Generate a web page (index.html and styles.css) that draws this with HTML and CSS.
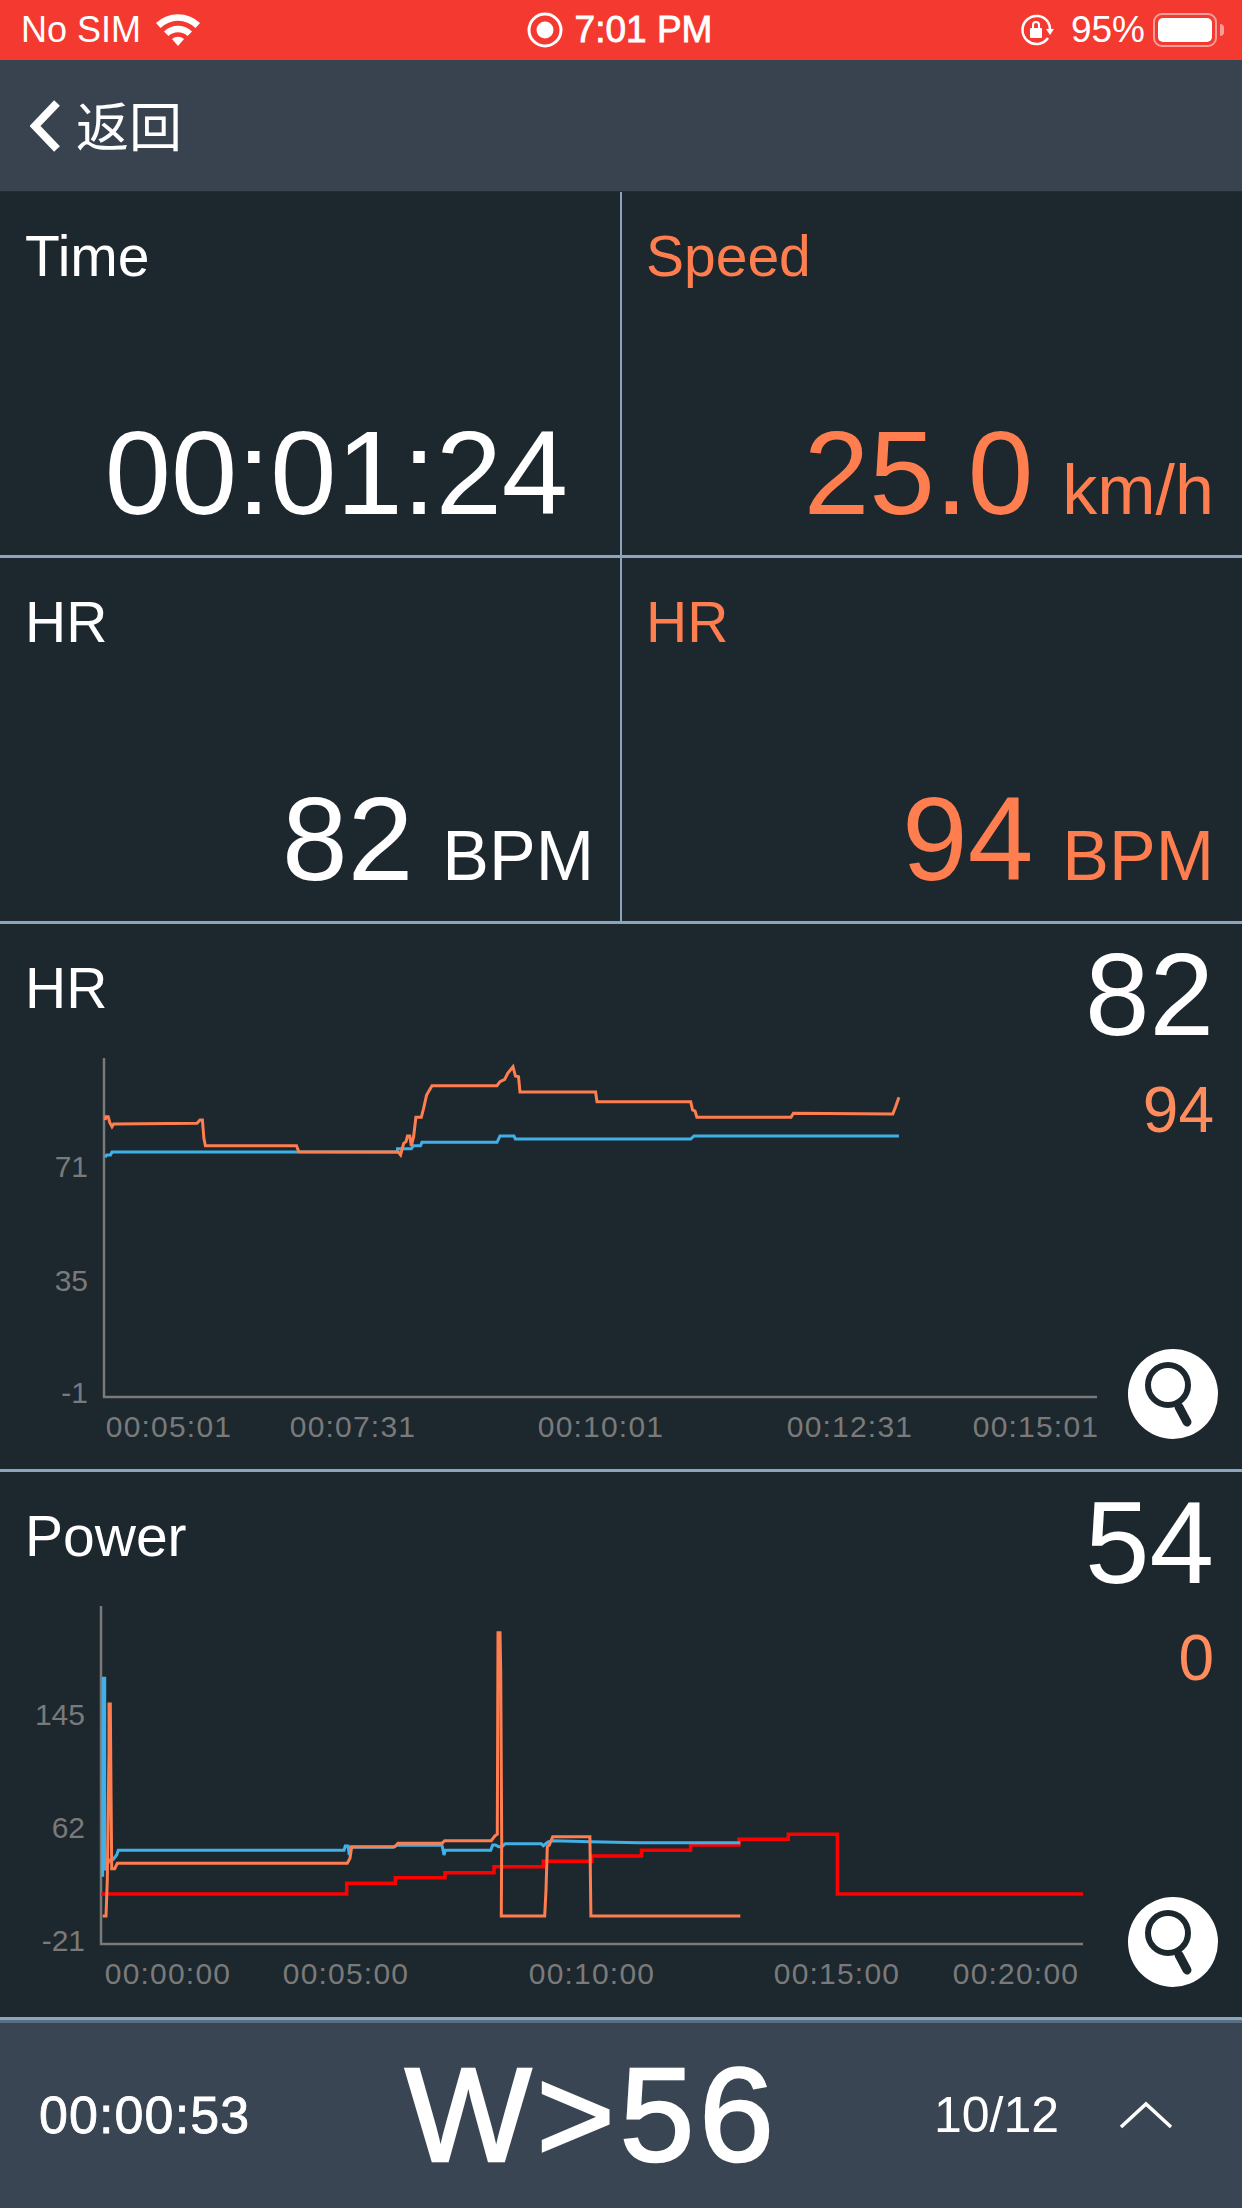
FILE: index.html
```html
<!DOCTYPE html>
<html lang="en">
<head>
    <meta charset="UTF-8">
    <meta name="viewport" content="width=device-width, initial-scale=1.0">
    <title>Workout</title>
    <link rel="stylesheet" href="styles.css">
</head>
<body>
    <div class="status-bar">
        <div class="status-left">
            <span>No SIM</span>
            <svg class="wifi" width="46" height="34" viewBox="0 0 46 34">
                <path d="M1 11 A32 32 0 0 1 45 11 L40.500 16 A25 25 0 0 0 5.500 16 Z" fill="#fff"/>
                <path d="M9 19.500 A20 20 0 0 1 37 19.500 L32.500 24 A14 14 0 0 0 13.500 24 Z" fill="#fff"/>
                <path d="M17 27 A9 9 0 0 1 29 27 L23 34 Z" fill="#fff"/>
            </svg>
        </div>
        <div class="status-center">
            <svg width="36" height="36" viewBox="0 0 36 36">
                <circle cx="18" cy="18" r="16" fill="none" stroke="#fff" stroke-width="3"/>
                <circle cx="18" cy="18" r="8.500" fill="#fff"/>
            </svg>
            <span>7:01 PM</span>
        </div>
        <div class="status-right">
            <svg width="34" height="32" viewBox="0 0 34 32">
                <path d="M27 24 A14 14 0 1 1 27 8" fill="none" stroke="#fff" stroke-width="2.500"/>
                <path d="M25 15 H33 L29 21 Z" fill="#fff"/>
                <path d="M27 8 A14 14 0 0 1 29 15" fill="none" stroke="#fff" stroke-width="2.500"/>
                <rect x="9" y="14" width="12" height="10" rx="1" fill="#fff"/>
                <path d="M12 14 V11 A3 3 0 0 1 18 11 V14" fill="none" stroke="#fff" stroke-width="2"/>
            </svg>
            <span>95%</span>
            <div class="battery"><div class="battery-fill"></div></div>
            <div class="battery-cap"></div>
        </div>
    </div>

    <div class="nav-bar">
        <svg width="30" height="52" viewBox="0 0 30 52">
            <polyline points="27,3 5,26 27,49" fill="none" stroke="#fff" stroke-width="8"/>
        </svg>
        <span class="back-text">返回</span>
    </div>

    <div class="tiles">
        <div class="tile">
            <div class="tile-label">Time</div>
            <div class="tile-value time-value">00:01:24</div>
        </div>
        <div class="tile orange">
            <div class="tile-label">Speed</div>
            <div class="tile-value">25.0<span class="unit">km/h</span></div>
        </div>
        <div class="tile">
            <div class="tile-label">HR</div>
            <div class="tile-value">82<span class="unit">BPM</span></div>
        </div>
        <div class="tile orange">
            <div class="tile-label">HR</div>
            <div class="tile-value">94<span class="unit">BPM</span></div>
        </div>
    </div>

    <div class="chart-panel">
        <div class="chart-head">
            <div class="tile-label">HR</div>
            <div class="chart-values">
                <div class="chart-now">82</div>
                <div class="chart-target">94</div>
            </div>
        </div>
        <svg class="chart" width="1242" height="545" viewBox="0 924 1242 545">
            <polyline class="axis" points="104,1058 104,1397 1097,1397"/>
            <text class="y-label" x="88" y="1177">71</text>
            <text class="y-label" x="88" y="1291">35</text>
            <text class="y-label" x="88" y="1403">-1</text>
            <text class="x-label" x="169" y="1437">00:05:01</text>
            <text class="x-label" x="353" y="1437">00:07:31</text>
            <text class="x-label" x="601" y="1437">00:10:01</text>
            <text class="x-label" x="850" y="1437">00:12:31</text>
            <text class="x-label" x="1036" y="1437">00:15:01</text>
            <polyline class="line blue" points="105.200,1157.300 106.700,1155 110.500,1155 112,1152 397.500,1152 397.500,1148.700 411.300,1148.700 413.600,1145.700 420.500,1145.700 422,1142.300 497,1142.300 500,1136 513.900,1136 515.400,1139 690.700,1139 694,1136 898.900,1136"/>
            <polyline class="line coral" points="105.200,1120 105.900,1116.700 108.200,1116.700 109.800,1122.700 112,1126.700 113.600,1124 197,1123.300 200,1120 202.400,1120 203.900,1138.300 205.400,1145.700 296.500,1145.700 298.800,1151.700 398.300,1152 400.600,1155 403.700,1143.300 406,1141.700 407.500,1136 409.800,1136 411.300,1146 413.600,1136.700 415.900,1117.300 421.300,1117.300 423.600,1108.300 426.600,1095 432,1085.700 497,1085.700 500,1081.700 504.700,1079.300 507.700,1073.300 513,1066.700 515.400,1076 518.500,1076.700 520,1092 595.600,1092 597,1101.700 690.700,1101.700 692.600,1110 695,1111 696.900,1117.300 791,1117.300 793.400,1113.300 892.800,1114 895.600,1106.700 898.900,1097.300"/>
        </svg>
        <div class="zoom-button">
            <svg width="90" height="90" viewBox="0 0 90 90">
                <circle cx="40" cy="36" r="20" fill="none" stroke="#1d272e" stroke-width="6"/>
                <line x1="51" y1="58" x2="59" y2="73" stroke="#1d272e" stroke-width="9" stroke-linecap="round"/>
            </svg>
        </div>
    </div>

    <div class="chart-panel">
        <div class="chart-head">
            <div class="tile-label">Power</div>
            <div class="chart-values">
                <div class="chart-now">54</div>
                <div class="chart-target">0</div>
            </div>
        </div>
        <svg class="chart" width="1242" height="544" viewBox="0 1472 1242 544">
            <polyline class="axis" points="101,1606 101,1944 1083,1944"/>
            <text class="y-label" x="85" y="1725">145</text>
            <text class="y-label" x="85" y="1838">62</text>
            <text class="y-label" x="85" y="1951">-21</text>
            <text class="x-label" x="168" y="1984">00:00:00</text>
            <text class="x-label" x="346" y="1984">00:05:00</text>
            <text class="x-label" x="592" y="1984">00:10:00</text>
            <text class="x-label" x="837" y="1984">00:15:00</text>
            <text class="x-label" x="1016" y="1984">00:20:00</text>
            <polyline class="line red" points="101.300,1894 346.700,1894 346.700,1883.300 395.300,1883.300 395.300,1877.700 445,1877.700 445,1872.700 494,1872.700 494,1866.700 543.300,1866.700 543.300,1861.300 591.900,1861.300 591.900,1856 641.500,1856 641.500,1850.300 690.600,1850.300 690.600,1845 739,1845 739,1839.300 788.300,1839.300 788.300,1834.300 837.400,1834.300 837.400,1894 1083,1894"/>
            <polyline class="line blue" points="102.700,1876.700 103.300,1678.300 104.700,1678.300 104.700,1870 109.300,1860 113.300,1859.300 116.700,1855 118.300,1850.300 344,1850.300 345.300,1846 348,1846 349.300,1855 350.700,1847.300 393.300,1847.300 396.700,1845.300 442,1845.300 444,1855 445.300,1850.300 490.700,1850.300 492.700,1845 495.300,1845 498.700,1846.700 502,1846.700 505.300,1843.700 541.300,1843.700 543.300,1845.700 548,1842 553.300,1840.700 590.900,1841.700 638.500,1842.700 740.300,1842.700"/>
            <polyline class="line coral" points="102.700,1916 106,1916 107.300,1880 109,1750 109,1704 110.300,1704 111,1790 111.700,1868.700 114.700,1868.700 117.300,1863.300 347.300,1863.300 350,1858.300 351.700,1846.700 394.700,1846.700 398,1843.300 442,1843.300 444.700,1840.700 491.300,1840.700 494.700,1836 497.300,1834.300 498,1632.700 500,1632.700 500.700,1670 501.700,1840 501.300,1916 544.700,1916 546,1890 547.300,1846.700 549.300,1845 552.700,1836.700 589.900,1836.700 590.900,1916 740.300,1916"/>
        </svg>
        <div class="zoom-button">
            <svg width="90" height="90" viewBox="0 0 90 90">
                <circle cx="40" cy="36" r="20" fill="none" stroke="#1d272e" stroke-width="6"/>
                <line x1="51" y1="58" x2="59" y2="73" stroke="#1d272e" stroke-width="9" stroke-linecap="round"/>
            </svg>
        </div>
    </div>

    <div class="footer">
        <div class="lap-time">00:00:53</div>
        <div class="target">W&gt;56</div>
        <div class="lap-count">10/12</div>
        <svg width="54" height="28" viewBox="0 0 54 28">
            <polyline points="2,26 27,3 52,26" fill="none" stroke="#fff" stroke-width="3.500"/>
        </svg>
    </div>
</body>
</html>
```
FILE: styles.css
```css
body {
    margin: 0;
    width: 1242px;
    height: 2208px;
    overflow: hidden;
    background-color: #1d272e;
    color: white;
    font-family: "Liberation Sans", Arial, sans-serif;
}

.status-bar {
    height: 60px;
    background-color: #f43a30;
    display: flex;
    align-items: center;
    font-size: 36px;
}

.status-left {
    flex: 1;
    display: flex;
    align-items: center;
    gap: 14px;
    padding-left: 21px;
}

.wifi {
    margin-top: -2px;
}

.status-center {
    display: flex;
    align-items: center;
    gap: 12px;
    font-size: 37px;
    -webkit-text-stroke: 0.8px white;
    margin-left: -6px;
}

.status-right {
    flex: 1;
    display: flex;
    align-items: center;
    justify-content: flex-end;
    padding-right: 18px;
    font-size: 37px;
}

.status-right span {
    margin-left: 16px;
    margin-right: 8px;
}

.battery {
    width: 64px;
    height: 34px;
    box-sizing: border-box;
    padding: 3px;
    border: 2px solid rgba(255, 255, 255, 0.5);
    border-radius: 9px;
}

.battery-fill {
    height: 100%;
    background-color: white;
    border-radius: 5px;
}

.battery-cap {
    width: 4px;
    height: 12px;
    margin-left: 3px;
    background-color: rgba(255, 255, 255, 0.5);
    border-radius: 0 4px 4px 0;
}

.nav-bar {
    height: 132px;
    background-color: #38434f;
    display: flex;
    align-items: center;
    gap: 16px;
    padding-left: 30px;
    box-sizing: border-box;
    border-bottom: 1px solid #222d34;
}

.back-text {
    font-family: "Noto Sans CJK SC", sans-serif;
    font-weight: 400;
    font-size: 53px;
    line-height: 60px;
    margin-top: -4px;
}

.tiles {
    display: grid;
    grid-template-columns: 622px 620px;
    grid-auto-rows: 366px;
}

.tile {
    box-sizing: border-box;
    display: flex;
    flex-direction: column;
    justify-content: space-between;
    padding: 32px 26px 20px 25px;
    border-bottom: 3px solid #8ba5bc;
    border-right: 2px solid #8ba5bc;
}

.tile:nth-child(even) {
    border-right: none;
    padding-left: 24px;
    padding-right: 28px;
}

.orange {
    color: #ff7e4f;
}

.tile-label {
    font-size: 57px;
    line-height: 64px;
}

.tile-value {
    font-size: 118px;
    line-height: 124px;
    text-align: right;
}

.time-value {
    font-size: 119px;
    padding-right: 26px;
}

.unit {
    font-size: 70px;
    line-height: 1;
    margin-left: 29px;
}

.chart-panel {
    position: relative;
    height: 548px;
    box-sizing: border-box;
    display: grid;
    border-bottom: 3px solid #8ba5bc;
}

.chart-panel:last-of-type {
    height: 544px;
    border-bottom: none;
}

.chart-head,
.chart {
    grid-area: 1 / 1;
}

.chart-head {
    display: flex;
    justify-content: space-between;
    padding: 32px 28px 0 25px;
}

.chart-values {
    text-align: right;
    margin-top: -23px;
}

.chart-now {
    font-size: 116px;
    line-height: 124px;
}

.chart-target {
    font-size: 64px;
    line-height: 80px;
    margin-top: 13px;
    color: #ff8c5c;
}

.axis {
    fill: none;
    stroke: #7a7a7a;
    stroke-width: 2.500;
}

.y-label,
.x-label {
    fill: #7a7a7a;
    font-size: 30px;
}

.y-label {
    text-anchor: end;
}

.x-label {
    text-anchor: middle;
    letter-spacing: 1.200px;
}

.line {
    fill: none;
    stroke-width: 3;
}

.blue {
    stroke: #3fb1e8;
}

.coral {
    stroke: #ff7e4f;
}

.red {
    stroke: #ff0000;
    stroke-width: 3.500;
}

.zoom-button {
    position: absolute;
    right: 24px;
    bottom: 30px;
    width: 90px;
    height: 90px;
    border-radius: 50%;
    background-color: white;
}

.footer {
    height: 192px;
    box-sizing: border-box;
    background-color: #394552;
    border-top: 3px solid #5a6f84;
    box-shadow: 0 -3px 0 #84a0b8;
    display: flex;
    align-items: center;
    padding-left: 39px;
    padding-bottom: 6px;
}

.lap-time {
    width: 366px;
    font-size: 52px;
    letter-spacing: 1.100px;
    -webkit-text-stroke: 0.8px white;
}

.target {
    width: 529px;
    font-size: 134px;
    letter-spacing: 5px;
    -webkit-text-stroke: 2.500px white;
}

.lap-count {
    width: 185px;
    font-size: 50px;
}
```
